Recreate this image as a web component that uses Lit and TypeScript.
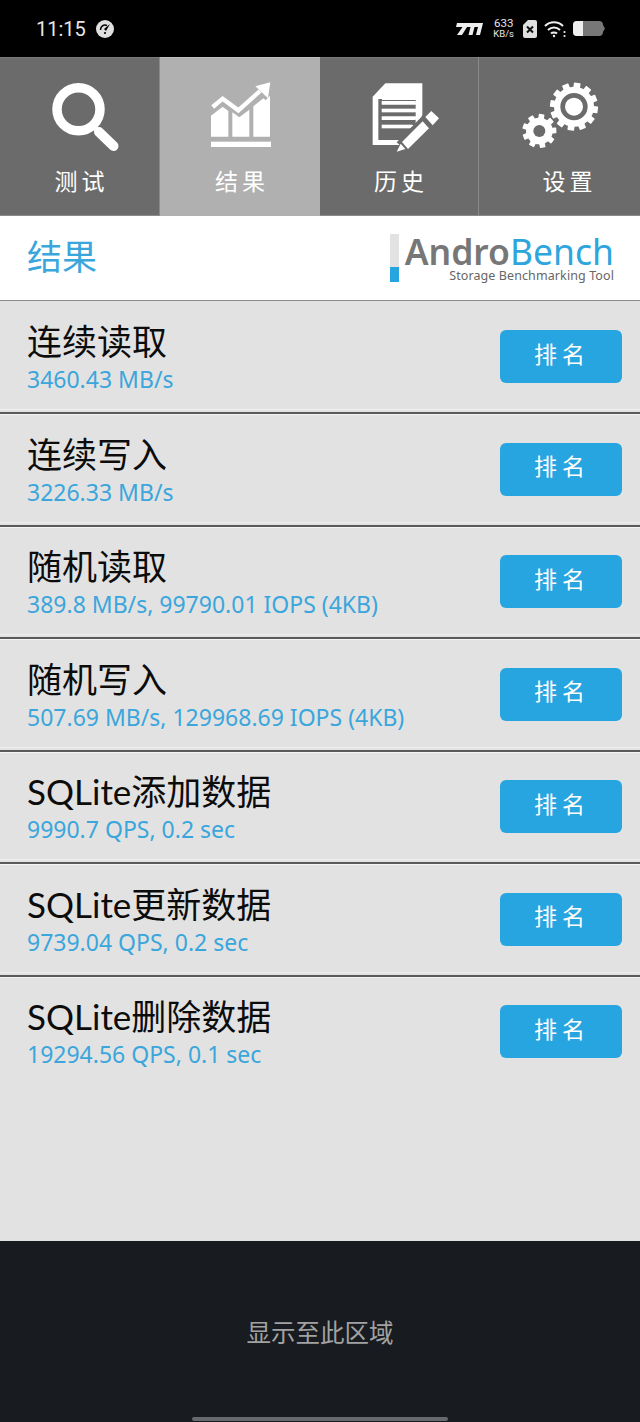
import { LitElement, html, css, svg } from 'lit';
import { customElement } from 'lit/decorators.js';

const BG = '#6b6b6b';

// toothed wheel, drawn in the 3x coords of the icon box
const gear = (cx: number, cy: number, r: number, tooth: number, count: number, tw: number) => {
  const teeth = [];
  for (let i = 0; i < count; i++) {
    const a = (360 / count) * i + 8;
    teeth.push(svg`<rect x=${cx - tw / 2} y=${cy - tooth} width=${tw} height=${tooth - r + 4} rx="2" transform="rotate(${a} ${cx} ${cy})"/>`);
  }
  return svg`<g fill="#fff">${teeth}<circle cx=${cx} cy=${cy} r=${r}/></g>`;
};

const searchIcon = html`<svg class="ico" viewBox="0 0 90 85">
  <circle cx="43.500" cy="34.300" r="21.500" fill="none" stroke="#fff" stroke-width="9.500"/>
  <path d="M58 51 64 57" stroke="#fff" stroke-width="5"/>
  <path d="M64 57 78.500 71" stroke="#fff" stroke-width="10" stroke-linecap="round"/>
</svg>`;

const chartIcon = html`<svg class="ico" viewBox="0 0 240 255" fill="#fff">
  <path d="M33 122 68 95 85 108V185H33Z"/>
  <path d="M97 112 118 127 148 104V185H97Z"/>
  <path d="M160 94 190 70 197 76 210 62V185H160Z"/>
  <path d="M38 96 68 71 115 106 180 48" fill="none" stroke="#fff" stroke-width="13"/>
  <path d="M211 22 166 34 204 70Z"/>
  <rect x="33" y="200" width="180" height="16"/>
</svg>`;

const docIcon = html`<svg class="ico" viewBox="0 0 270 255">
  <path d="M38 65 76 25H187V120L150 195V210H38Z" fill="#fff"/>
  <path d="M90 40H167V75H65V82H167V88H65V103H167V111H65V125H167V133H65V150H167V158H65V195H128L167 150V40Z" fill=${BG}/>
  <path d="M55 72V195H66V72Z" fill=${BG}/>
  <g fill="#fff">
    <rect x="65" y="78" width="102" height="11"/>
    <rect x="65" y="101" width="102" height="11"/>
    <rect x="65" y="124" width="102" height="11"/>
    <rect x="65" y="149" width="92" height="11"/>
  </g>
  <path d="M110 202 184 126 224 163 147 236Z" fill=${BG}/>
  <path d="M126 201 188 139 207 160 144 222Z" fill="#fff"/>
  <path d="M196 126 214 108 237 130 218 151Z" fill="#fff"/>
  <path d="M110 230 122 206 136 222Z" fill="#fff"/>
</svg>`;

const gearsIcon = html`<svg class="ico" viewBox="0 0 270 255">
  ${gear(177, 95, 60, 72, 12, 20)}
  <circle cx="177" cy="95" r="34" fill="#fff" stroke=${BG} stroke-width="14"/>
  ${gear(73, 168, 40, 51, 9, 17)}
  <circle cx="73" cy="168" r="18" fill=${BG}/>
</svg>`;

const tabs = [
  { label: '测试', icon: searchIcon, cls: '' },
  { label: '结果', icon: chartIcon, cls: 'active' },
  { label: '历史', icon: docIcon, cls: 'history' },
  { label: '设置', icon: gearsIcon, cls: 'settings' },
];

const rows = [
  ['连续读取', '3460.43 MB/s'],
  ['连续写入', '3226.33 MB/s'],
  ['随机读取', '389.8 MB/s, 99790.01 IOPS (4KB)'],
  ['随机写入', '507.69 MB/s, 129968.69 IOPS (4KB)'],
  ['SQLite添加数据', '9990.7 QPS, 0.2 sec'],
  ['SQLite更新数据', '9739.04 QPS, 0.2 sec'],
  ['SQLite删除数据', '19294.56 QPS, 0.1 sec'],
];

@customElement('app-root')
export class AppRoot extends LitElement {
  static styles = css`
    :host {
      display: block;
      width: 640px;
      height: 1422px;
      overflow: hidden;
      font-family: "Noto Sans", "Noto Sans CJK SC", sans-serif;
    }
    .page {
      display: flex;
      flex-direction: column;
      height: 1422px;
    }
    .status {
      height: 57px;
      flex: none;
      background: #000;
      color: #e6e6e6;
      display: flex;
      align-items: center;
      justify-content: space-between;
      padding: 0 35px 0 36px;
      box-sizing: border-box;
    }
    .status-left {
      display: flex;
      align-items: center;
      gap: 10px;
      font-family: "Roboto", sans-serif;
      font-size: 20px;
    }
    .status-right {
      display: flex;
      align-items: center;
    }
    .speed {
      font-family: "Roboto", sans-serif;
      font-size: 9.500px;
      line-height: 10px;
      text-align: center;
      margin: 0 9px 0 10px;
    }
    .speed span { font-size: 11.500px; }
    .wifi { margin-left: 7px; }
    .battery { margin-left: 7px; }
    .tabs {
      height: 159px;
      flex: none;
      display: grid;
      grid-template-columns: 160px 160px 159px 161px;
      background: #6b6b6b;
    }
    .tab {
      display: flex;
      flex-direction: column;
      align-items: center;
      color: #fff;
      border-right: 1px solid #8a8a8a;
      box-sizing: border-box;
      padding-top: 18px;
      box-shadow: inset 0 1px 0 #7a7a7a, inset 0 -1px 0 #8a8a8a;
    }
    .tab:last-child { border-right: none; }
    .tab.active {
      background: #b0b0b0;
      border-right: none;
      box-shadow: inset 0 1px 0 #bcbcbc;
    }
    .ico {
      display: block;
      width: 90px;
      height: 85px;
      flex: none;
    }
    .tab.active .ico { width: 80px; }
    .tab.history .ico { margin-left: 11px; }
    .tab-label {
      margin-top: 6px;
      font-size: 23px;
      line-height: 30px;
      letter-spacing: 4px;
      margin-right: -4px;
    }
    .tab.settings .tab-label { margin-left: 16px; }
    .header {
      height: 84px;
      flex: none;
      background: #fff;
      border-bottom: 1px solid #8c8c8c;
      display: flex;
      align-items: center;
      justify-content: space-between;
      padding: 0 26px 0 27px;
    }
    .header-title {
      color: #3aa6dc;
      font-size: 35px;
      line-height: 40px;
      margin-top: -2px;
    }
    .logo {
      display: flex;
      gap: 6px;
      align-items: stretch;
    }
    .logo-bar {
      width: 9px;
      height: 48px;
      background: linear-gradient(#e2e2e2 0 68%, #27a5e0 68%);
    }
    .logo-text { display: flex; flex-direction: column; align-items: flex-end; }
    .logo-name {
      font-family: "Noto Sans", sans-serif;
      font-size: 35.500px;
      line-height: 34px;
      color: #2ea6dd;
    }
    .logo-name b { color: #777; font-weight: 600; }
    .logo-sub {
      font-family: "Noto Sans", sans-serif;
      font-size: 12.500px;
      line-height: 15px;
      color: #666;
      letter-spacing: 0.1px;
    }
    .list {
      flex: 1;
      background: #e2e2e2;
      padding-top: 0.500px;
    }
    .row {
      height: 112.500px;
      box-sizing: border-box;
      border-bottom: 2px solid #5a5a5a;
      border-top: 1px solid #f4f4f4;
      background: linear-gradient(to top, transparent 2px, #efefef 2px 3px, transparent 3px);
      display: flex;
      align-items: center;
      justify-content: space-between;
      padding: 0 18px 0 27px;
    }
    .row:first-child { border-top-color: transparent; }
    .row:last-child { border-bottom-color: transparent; background: none; }
    .row-title {
      font-family: "Lato", "Noto Sans CJK SC", sans-serif;
      font-size: 35px;
      line-height: 42px;
      color: #0c0c0c;
    }
    .row-sub {
      margin-top: 2px;
      font-size: 23px;
      line-height: 30px;
      color: #3aa6dc;
    }
    .rank {
      width: 122px;
      height: 53px;
      margin-top: -1px;
      border-radius: 6px;
      background: #27a5e0;
      color: #fff;
      display: flex;
      align-items: center;
      justify-content: center;
      font-size: 23px;
      letter-spacing: 5px;
      line-height: 46px;
      padding: 0 0 6px 2px;
      box-sizing: border-box;
    }
    .footer {
      height: 181px;
      flex: none;
      background: #181b20;
      color: #a2a2a2;
      font-size: 24.500px;
      display: flex;
      align-items: center;
      justify-content: center;
      position: relative;
    }
    .home {
      position: absolute;
      left: 192px;
      bottom: 1px;
      width: 256px;
      height: 4px;
      border-radius: 2px;
      background: #66696d;
    }
  `;

  render() {
    return html`<div class="page">
      <div class="status">
        <div class="status-left">
          <span>11:15</span>
          <svg width="18" height="18" viewBox="0 0 18 18">
            <circle cx="9" cy="9" r="9" fill="#e0e0e0"/>
            <path d="M4.500 10a4.500 4.500 0 0 1 6.500-4.500" fill="none" stroke="#000" stroke-width="1.600"/>
            <path d="M14 4 8 9 10 11Z" fill="#000"/>
            <circle cx="9" cy="13" r="1.100" fill="#000"/>
          </svg>
        </div>
        <div class="status-right">
          <svg width="27" height="14" viewBox="0 0 27 14" fill="#eee">
            <path d="M1 1H27L24 13H20L22 5H18.500L16.500 13H12.500L14.500 5H11L6 13H1L6.500 5H0Z"/>
          </svg>
          <div class="speed"><span>633</span><br />KB/s</div>
          <svg width="14" height="18" viewBox="0 0 14 18">
            <path d="M5 0H12a2 2 0 0 1 2 2V16a2 2 0 0 1-2 2H2a2 2 0 0 1-2-2V5Z" fill="#e0e0e0"/>
            <path d="M4 6.500 10 12.500M10 6.500 4 12.500" stroke="#111" stroke-width="2"/>
          </svg>
          <svg class="wifi" width="22" height="18" viewBox="0 0 22 18" fill="none" stroke="#eee" stroke-width="2">
            <path d="M1 6C6 1 14 1 19 6"/>
            <path d="M4 10C7.500 6.500 12.500 6.500 16 10"/>
            <path d="M7 13.500C8.500 12 11.500 12 13 13.500"/>
            <circle cx="10" cy="16" r="1.200" fill="#eee" stroke="none"/>
            <circle cx="20.500" cy="12" r="1.100" fill="#eee" stroke="none"/>
            <circle cx="20.500" cy="16" r="1.100" fill="#eee" stroke="none"/>
          </svg>
          <svg class="battery" width="32" height="15" viewBox="0 0 32 15">
            <rect x="0" y="0" width="30" height="15" rx="4" fill="#777"/>
            <path d="M4 0H10V15H4a4 4 0 0 1-4-4V4a4 4 0 0 1 4-4Z" fill="#f0f0f0"/>
            <path d="M30 4 32 7.500 30 11Z" fill="#777"/>
          </svg>
        </div>
      </div>
      <div class="tabs">
        ${tabs.map((t) => html`<div class="tab ${t.cls}">
          ${t.icon}
          <div class="tab-label">${t.label}</div>
        </div>`)}
      </div>
      <div class="header">
        <div class="header-title">结果</div>
        <div class="logo">
          <div class="logo-bar"></div>
          <div class="logo-text">
            <div class="logo-name"><b>Andro</b>Bench</div>
            <div class="logo-sub">Storage Benchmarking Tool</div>
          </div>
        </div>
      </div>
      <div class="list">
        ${rows.map(([title, sub]) => html`<div class="row">
          <div>
            <div class="row-title">${title}</div>
            <div class="row-sub">${sub}</div>
          </div>
          <div class="rank">排名</div>
        </div>`)}
      </div>
      <div class="footer">显示至此区域<div class="home"></div></div>
    </div>`;
  }
}
